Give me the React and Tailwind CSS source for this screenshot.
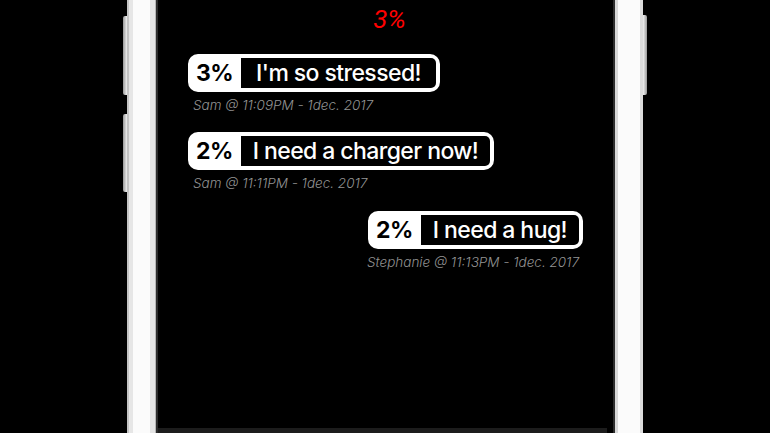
import React from 'react'

const messages = [
    { id: 1, level: '3%', text: "I'm so stressed!", who: 'Sam', time: '11:09PM', mine: false, pad: 'px-[15px]' },
    { id: 2, level: '2%', text: 'I need a charger now!', who: 'Sam', time: '11:11PM', mine: false, pad: 'px-3' },
    { id: 3, level: '2%', text: 'I need a hug!', who: 'Stephanie', time: '11:13PM', mine: true, pad: 'px-3' },
]

// Battery shaped bubble
function Bubble({ msg }) {
    return (
        <div className={'flex flex-col ' + (msg.mine ? 'items-end' : 'items-start')}>
            <div className='flex items-stretch bg-white border-4 border-white rounded-[10px]'>
                <span className='pl-[4px] pr-[8px] text-[23px] leading-[30px] font-bold text-black tracking-tight'>
                    {msg.level}
                </span>
                <span className={'bg-black rounded-r-[5px] text-[23px] leading-[30px] font-medium text-white tracking-tight ' + msg.pad}>
                    {msg.text}
                </span>
            </div>
            <div className={'mt-[3px] text-[13.5px] italic font-light text-[#939393] ' + (msg.mine ? 'pr-[4px]' : 'pl-[5px]')}>
                {msg.who} @ {msg.time} - 1dec. 2017
            </div>
        </div>
    )
}

export default function App() {
    return (
        <div className='h-[433px] w-[770px] bg-black flex overflow-hidden' style={{ fontFamily: 'Inter, "Noto Sans", sans-serif' }}>
            {/* left edge */}
            <div className='w-[127px] relative'>
                <div className='absolute right-0 top-[16px] w-[4px] h-[79px] rounded-l-[2px] bg-linear-to-r from-[#9a9a9a] to-[#f2f2f2]'></div>
                <div className='absolute right-0 top-[114px] w-[4px] h-[78px] rounded-l-[2px] bg-linear-to-r from-[#9a9a9a] to-[#f2f2f2]'></div>
            </div>

            {/* left frame */}
            <div className='w-[31px] flex'>
                <div className='w-[2px] bg-[#c4c4c4]'></div>
                <div className='w-[4px] bg-[#e6e6e6]'></div>
                <div className='flex-1 bg-[#fbfbfb]'></div>
                <div className='w-[5px] bg-[#e4e4e4]'></div>
                <div className='w-[1px] bg-[#b5b5b5]'></div>
                <div className='w-[2px] bg-[#2c2c2c]'></div>
            </div>

            {/* screen */}
            <div className='w-[455px] bg-black flex flex-col'>
                <div className='text-center text-[26px] leading-[30px] italic text-[#ff0000] pt-[4px] pl-[8px]' style={{ fontFamily: 'Roboto, "Noto Sans", sans-serif' }}>
                    3%
                </div>
                <div className='px-[30px] pt-[20px] flex flex-col gap-[17px]'>
                    {messages.map(msg => <Bubble key={msg.id} msg={msg} />)}
                </div>
                <div className='mt-auto h-[5px] mr-[6px] bg-[#1c1c1c]'></div>
            </div>

            {/* right frame */}
            <div className='w-[30px] flex'>
                <div className='w-[2px] bg-[#2c2c2c]'></div>
                <div className='w-[3px] bg-[#d8d8d8]'></div>
                <div className='flex-1 bg-[#fbfbfb]'></div>
                <div className='w-[3px] bg-[#dcdcdc]'></div>
            </div>

            {/* right edge */}
            <div className='flex-1 relative'>
                <div className='absolute left-0 top-[15px] w-[4px] h-[80px] rounded-r-[2px] bg-linear-to-r from-[#f2f2f2] to-[#9a9a9a]'></div>
            </div>
        </div>
    )
}
